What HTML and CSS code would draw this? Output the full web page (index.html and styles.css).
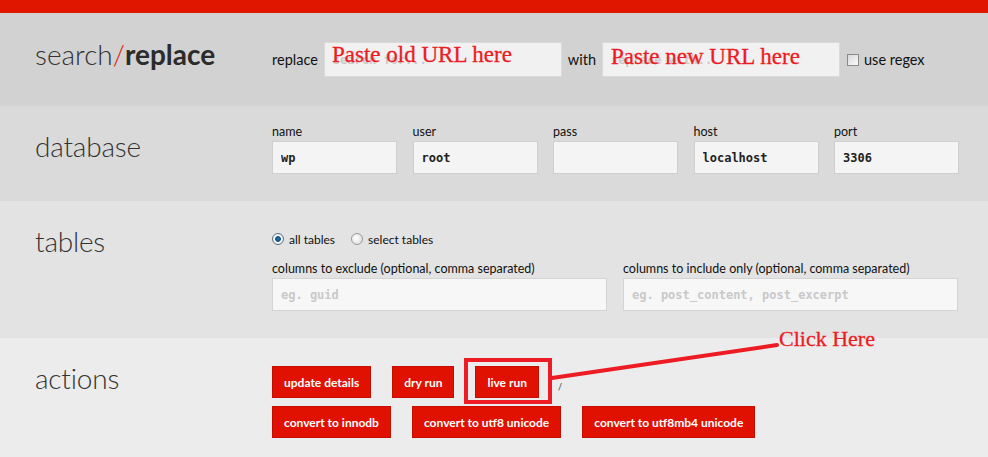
FILE: index.html
```html
<html>
<head>
  <meta charset="utf-8">
  <link rel="stylesheet" href="styles.css">
</head>
<body>
  <div class="topbar"></div>

  <div class="row row-search">
    <h1 class="row-title">search<span class="slash">/</span><b>replace</b></h1>
    <div class="row-body search-body">
      <label class="lbl-big" for="search">replace</label>
      <input class="field field-wide" id="search" type="text" placeholder="search for...">
      <label class="lbl-big" for="replace">with</label>
      <input class="field field-wide" id="replace" type="text" placeholder="replace with...">
      <input class="check" id="regex" type="checkbox">
      <label class="lbl-big" for="regex">use regex</label>
    </div>
  </div>

  <div class="row row-db">
    <h2 class="row-title">database</h2>
    <div class="row-body db-grid">
      <div class="cell"><label class="lbl">name</label><input class="field" type="text" value="wp"></div>
      <div class="cell"><label class="lbl">user</label><input class="field" type="text" value="root"></div>
      <div class="cell"><label class="lbl">pass</label><input class="field" type="password" value=""></div>
      <div class="cell"><label class="lbl">host</label><input class="field" type="text" value="localhost"></div>
      <div class="cell"><label class="lbl">port</label><input class="field" type="text" value="3306"></div>
    </div>
  </div>

  <div class="row row-tables">
    <h2 class="row-title">tables</h2>
    <div class="row-body">
      <div class="radios">
        <label class="radio"><input type="radio" name="tables" checked> all tables</label>
        <label class="radio"><input type="radio" name="tables"> select tables</label>
      </div>
      <div class="cols-grid">
        <div class="cell"><label class="lbl">columns to exclude (optional, comma separated)</label><input class="field" type="text" placeholder="eg. guid"></div>
        <div class="cell"><label class="lbl">columns to include only (optional, comma separated)</label><input class="field" type="text" placeholder="eg. post_content, post_excerpt"></div>
      </div>
    </div>
  </div>

  <div class="row row-actions">
    <h2 class="row-title">actions</h2>
    <div class="row-body">
      <div class="btn-row">
        <button class="btn">update details</button>
        <button class="btn">dry run</button>
        <button class="btn">live run</button>
        <span class="spinner">/</span>
      </div>
      <div class="btn-row">
        <button class="btn">convert to innodb</button>
        <button class="btn">convert to utf8 unicode</button>
        <button class="btn">convert to utf8mb4 unicode</button>
      </div>
    </div>
  </div>

  <!-- annotations drawn over the screenshot -->
  <span class="note note-old">Paste old URL here</span>
  <span class="note note-new">Paste new URL here</span>
  <span class="note note-click">Click Here</span>
  <svg class="marks" width="988" height="457" viewBox="0 0 988 457">
    <rect x="466" y="360" width="84" height="42" fill="none" stroke="#ed1c24" stroke-width="4"/>
    <line x1="552" y1="378" x2="777" y2="345" stroke="#ed1c24" stroke-width="4" stroke-linecap="round"/>
  </svg>
</body>
</html>
```

FILE: styles.css
```css
body {
  margin: 0;
  background: #ececec;
  font-family: Lato, "Open Sans", sans-serif;
  color: #111;
}

.topbar {
  height: 13px;
  background: #e01600;
}

.row {
  display: grid;
  grid-template-columns: 237px 686px;
  padding-left: 35px;
}

.row-search { background: #d2d2d2; height: 93px; }
.row-db { background: #dadada; height: 95px; }
.row-tables { background: #e3e3e3; height: 137px; }
.row-actions { background: #ececec; height: 119px; }

.row-title {
  margin: 23px 0 0;
  font-size: 28px;
  font-weight: 300;
  line-height: 34px;
  color: #333;
  letter-spacing: -0.2px;
}

.row-search .row-title {
  margin-top: 24px;
  letter-spacing: 0;
}

.slash {
  color: #e01600;
}

.row-title b {
  font-weight: 700;
  color: #2b2b2b;
}

.search-body {
  display: flex;
  align-items: center;
  gap: 5px;
  padding-top: 29px;
  align-self: start;
}

.lbl-big {
  font-size: 14.5px;
}

.lbl {
  display: block;
  font-size: 12.5px;
  line-height: 14px;
  margin-bottom: 2px;
}

.field {
  box-sizing: border-box;
  width: 100%;
  height: 33px;
  padding: 0 8px;
  border: 1px solid #cfcfcf;
  background: #f4f4f4;
  font-family: "DejaVu Sans Mono", "Liberation Mono", monospace;
  font-size: 12px;
  font-weight: bold;
  color: #222;
  outline: none;
}

.field::placeholder {
  color: #c9c9c9;
}

.field-wide {
  width: 238px;
  height: 35px;
  margin: 0 1px;
  background: #f1f1f1;
  border-color: #dadada;
}

.check {
  -webkit-appearance: none;
  appearance: none;
  width: 12px;
  height: 12px;
  margin: 0 0 0 1px;
  border: 1px solid #8a8a8a;
  background: linear-gradient(135deg, #d8d8d8, #fafafa);
  box-sizing: border-box;
}

.db-grid {
  display: grid;
  grid-template-columns: repeat(5, 125px);
  column-gap: 15.5px;
  padding-top: 19px;
  align-self: start;
}

.row-tables .row-body {
  padding-top: 30px;
  align-self: start;
}

.radios {
  display: flex;
  gap: 16px;
  font-size: 12px;
  height: 16px;
  align-items: center;
}

.radio {
  display: flex;
  align-items: center;
  gap: 5px;
}

.radio input {
  -webkit-appearance: none;
  appearance: none;
  width: 12px;
  height: 12px;
  margin: 0;
  border-radius: 50%;
  border: 1px solid #999;
  background: radial-gradient(circle at 40% 40%, #fff, #d6d6d6);
  box-sizing: border-box;
}

.radio input:checked {
  border-color: #5a6f80;
  background: radial-gradient(circle, #1d77b8 0, #0b4d80 2.5px, #fff 3.2px, #cfd8df 100%);
}

.cols-grid {
  display: grid;
  grid-template-columns: 335px 335px;
  column-gap: 16px;
  margin-top: 15px;
}

.cols-grid .field {
  background: #f7f7f7;
  border-color: #d4d4d4;
}

.row-actions .row-body {
  padding-top: 28px;
  align-self: start;
}

.btn-row {
  display: flex;
  align-items: center;
  gap: 21px;
  margin-bottom: 8px;
}

.btn {
  height: 32px;
  padding: 0 11px;
  border: 1px solid #c40d00;
  background: #e01100;
  color: #fff;
  font-family: Lato, "Open Sans", sans-serif;
  font-size: 12px;
  font-weight: bold;
  cursor: pointer;
}

.spinner {
  margin-left: -2px;
  font-size: 9px;
  color: #334;
  padding-top: 8px;
}

.note {
  position: absolute;
  font-family: "Liberation Serif", serif;
  color: #ed1c24;
  white-space: nowrap;
  -webkit-text-stroke: 0.3px #ed1c24;
}

.note-old { left: 332px; top: 42px; font-size: 23px; }
.note-new { left: 611px; top: 44px; font-size: 23px; }
.note-click { left: 779px; top: 326px; font-size: 22px; }

.marks {
  position: absolute;
  left: 0;
  top: 0;
  pointer-events: none;
}
```
